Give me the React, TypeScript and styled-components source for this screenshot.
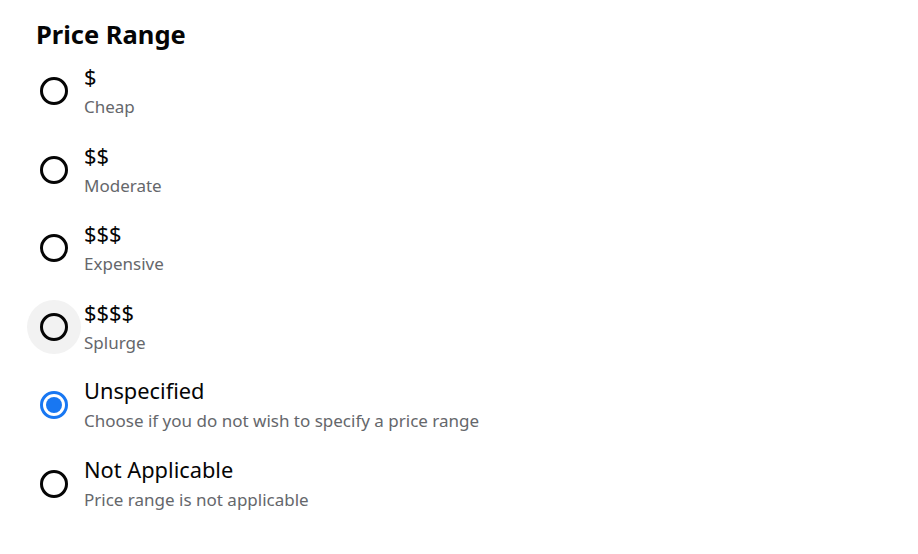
import React from "react";
import styled, { createGlobalStyle } from "styled-components";

const GlobalStyle = createGlobalStyle`
  html, body { margin: 0; padding: 0; background: #ffffff; }
  body { font-family: "Noto Sans", "Open Sans", sans-serif; color: #050505; }
`;

const Panel = styled.div`
  display: flex;
  flex-direction: column;
  padding: 18px 0 0 27px;
`;

const Title = styled.h2`
  margin: 0 0 2px 9px;
  font-size: 25.5px;
  line-height: 32px;
  font-weight: 700;
  color: #050505;
`;

const List = styled.div`
  display: flex;
  flex-direction: column;
`;

const Row = styled.label`
  display: flex;
  align-items: center;
  gap: 3px;
  height: 78.5px;
  cursor: pointer;
`;

const RadioHit = styled.span<{ $hover?: boolean }>`
  width: 54px;
  height: 54px;
  border-radius: 50%;
  display: flex;
  align-items: center;
  justify-content: center;
  flex: none;
  background: ${(p) => (p.$hover ? "#f2f2f2" : "transparent")};
`;

const RadioRing = styled.span<{ $checked?: boolean }>`
  box-sizing: border-box;
  width: 28px;
  height: 28px;
  border-radius: 50%;
  border: 3px solid ${(p) => (p.$checked ? "#1877f2" : "#050505")};
  display: flex;
  align-items: center;
  justify-content: center;
`;

const RadioDot = styled.span`
  width: 16px;
  height: 16px;
  border-radius: 50%;
  background: #1877f2;
`;

const Texts = styled.span`
  display: flex;
  flex-direction: column;
`;

const Label = styled.span`
  font-size: 21.8px;
  line-height: 28px;
  color: #050505;
`;

const Sub = styled.span`
  margin-top: 4px;
  font-size: 17px;
  line-height: 24px;
  color: #65676b;
`;

const options = [
  { label: "$", sub: "Cheap" },
  { label: "$$", sub: "Moderate" },
  { label: "$$$", sub: "Expensive" },
  { label: "$$$$", sub: "Splurge", hover: true },
  { label: "Unspecified", sub: "Choose if you do not wish to specify a price range", checked: true },
  { label: "Not Applicable", sub: "Price range is not applicable" },
];

export default function App() {
  return (
    <>
      <GlobalStyle />
      <Panel>
        <Title>Price Range</Title>
        <List role="radiogroup">
          {options.map((o) => (
            <Row key={o.label}>
              <RadioHit $hover={o.hover}>
                <RadioRing $checked={o.checked}>{o.checked && <RadioDot />}</RadioRing>
              </RadioHit>
              <Texts>
                <Label>{o.label}</Label>
                <Sub>{o.sub}</Sub>
              </Texts>
            </Row>
          ))}
        </List>
      </Panel>
    </>
  );
}
